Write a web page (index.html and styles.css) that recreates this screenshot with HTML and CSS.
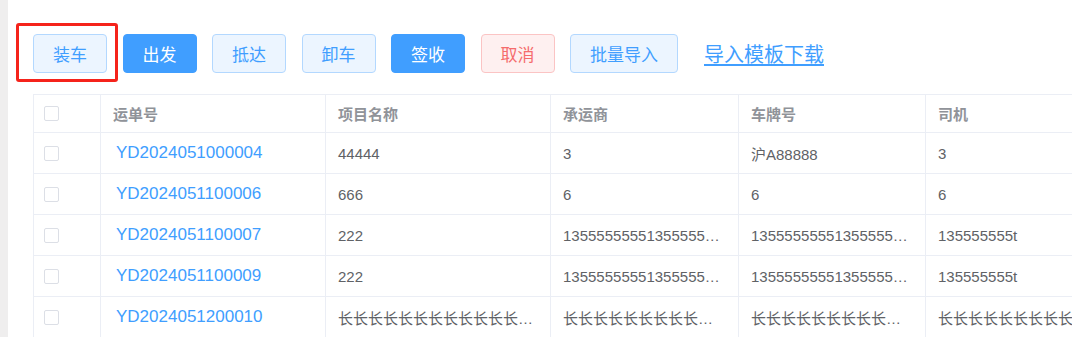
FILE: index.html
```html
<!DOCTYPE html>
<html>
<head>
  <meta charset="utf-8">
  <link rel="stylesheet" href="styles.css">
</head>
<body>
  <div class="side"></div>
  <div class="main">
    <div class="toolbar">
      <span class="mark-wrap">
        <button class="btn plain">装车</button>
        <span class="mark"></span>
      </span>
      <button class="btn primary">出发</button>
      <button class="btn plain">抵达</button>
      <button class="btn plain">卸车</button>
      <button class="btn primary">签收</button>
      <button class="btn danger">取消</button>
      <button class="btn plain">批量导入</button>
      <a class="tpl-link" href="#">导入模板下载</a>
    </div>

    <table class="grid">
      <colgroup>
        <col class="c-check">
        <col class="c-no">
        <col class="c-name">
        <col class="c-carrier">
        <col class="c-plate">
        <col class="c-driver">
      </colgroup>
      <thead>
        <tr>
          <th><span class="check"></span></th>
          <th>运单号</th>
          <th>项目名称</th>
          <th>承运商</th>
          <th>车牌号</th>
          <th>司机</th>
        </tr>
      </thead>
      <tbody>
        <tr>
          <td><span class="check"></span></td>
          <td><a class="no" href="#">YD2024051000004</a></td>
          <td>44444</td>
          <td>3</td>
          <td>沪A88888</td>
          <td>3</td>
        </tr>
        <tr>
          <td><span class="check"></span></td>
          <td><a class="no" href="#">YD2024051100006</a></td>
          <td>666</td>
          <td>6</td>
          <td>6</td>
          <td>6</td>
        </tr>
        <tr>
          <td><span class="check"></span></td>
          <td><a class="no" href="#">YD2024051100007</a></td>
          <td>222</td>
          <td>135555555513555555555</td>
          <td>135555555513555555555</td>
          <td>135555555t</td>
        </tr>
        <tr>
          <td><span class="check"></span></td>
          <td><a class="no" href="#">YD2024051100009</a></td>
          <td>222</td>
          <td>135555555513555555555</td>
          <td>135555555513555555555</td>
          <td>135555555t</td>
        </tr>
        <tr>
          <td><span class="check"></span></td>
          <td><a class="no" href="#">YD2024051200010</a></td>
          <td>长长长长长长长长长长长长长长长长长长</td>
          <td>长长长长长长长长长长长长长长长长</td>
          <td>长长长长长长长长长长长长长长长长</td>
          <td>长长长长长长长长长长长长长长长长</td>
        </tr>
      </tbody>
    </table>
  </div>
</body>
</html>
```

FILE: styles.css
```css
* {
  box-sizing: border-box;
}

body {
  margin: 0;
  display: flex;
  height: 337px;
  overflow: hidden;
  font-family: "Liberation Sans", "Noto Sans CJK SC", sans-serif;
  background: #fff;
}

.side {
  width: 8px;
  flex: none;
  background: #efeeee;
}

.main {
  flex: 1;
  min-width: 0;
  overflow: hidden;
  padding: 34px 0 0 25px;
}

.toolbar {
  display: flex;
  align-items: center;
  gap: 15.5px;
  height: 39px;
}

.btn {
  height: 39px;
  padding: 0 19px;
  font-family: inherit;
  font-size: 17px;
  border: 1px solid;
  border-radius: 4px;
  cursor: pointer;
}

.btn.plain {
  background: #ecf5ff;
  border-color: #b3d8ff;
  color: #409eff;
}

.btn.primary {
  background: #409eff;
  border-color: #409eff;
  color: #fff;
}

.btn.danger {
  background: #fef0f0;
  border-color: #fbc4c4;
  color: #f56c6c;
}

.mark-wrap {
  position: relative;
  display: inline-flex;
}

.mark {
  position: absolute;
  left: -17px;
  top: -11px;
  width: 102px;
  height: 59px;
  border: 3px solid #f5231b;
  border-radius: 3px;
  pointer-events: none;
}

.tpl-link {
  margin-left: 10.5px;
  font-size: 20px;
  color: #409eff;
  text-decoration: underline;
  text-underline-offset: 2px;
}

.grid {
  margin-top: 21px;
  width: 1300px;
  table-layout: fixed;
  border-collapse: collapse;
  border-top: 1px solid #ebeef5;
  border-left: 1px solid #ebeef5;
}

.c-check { width: 67px; }
.c-no { width: 225px; }
.c-name { width: 225px; }
.c-carrier { width: 188px; }
.c-plate { width: 187px; }
.c-driver { width: 408px; }

.grid th,
.grid td {
  border-right: 1px solid #ebeef5;
  border-bottom: 1px solid #ebeef5;
  padding: 0 12px;
  text-align: left;
  white-space: nowrap;
  overflow: hidden;
  text-overflow: ellipsis;
}

.grid th {
  height: 38px;
  font-size: 15px;
  font-weight: bold;
  color: #909399;
}

.grid td {
  height: 41px;
  font-size: 15px;
  color: #606266;
}

.grid th:first-child,
.grid td:first-child {
  padding: 0 10px;
}

.check {
  display: block;
  width: 15px;
  height: 15px;
  border: 1px solid #dcdfe6;
  border-radius: 2px;
  background: #fff;
}

.no {
  padding-left: 3px;
  font-size: 17px;
  color: #409eff;
  text-decoration: none;
}
```
